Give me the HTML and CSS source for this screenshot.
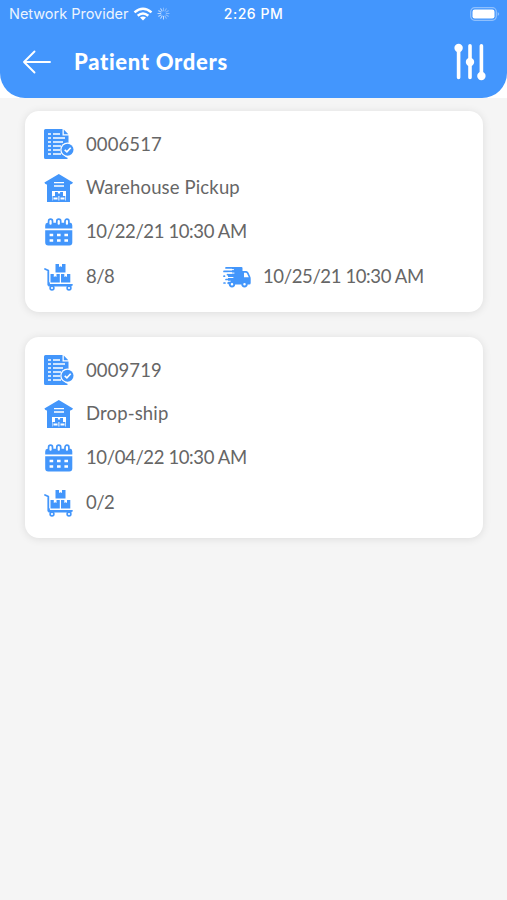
FILE: index.html
```html
<!DOCTYPE html>
<html lang="en">
<head>
<meta charset="utf-8">
<title>Patient Orders</title>
<link rel="stylesheet" href="styles.css">
</head>
<body>
<svg class="sprite" aria-hidden="true">
  <symbol id="order" viewBox="0 0 30 32">
    <path fill="#4396fb" d="M1.500 1h17v6.500h6V15a6.800 6.800 0 0 0-5 11.500q1.500 2.500 4 3.200V31h-22A1.500 1.500 0 0 1 0 29.500v-27A1.500 1.500 0 0 1 1.500 1zM19.800 1.500l4.500 4.700h-4.500z"/>
    <path stroke="#fff" stroke-width="1.400" fill="none" d="M4 6h3M4 10h3M4 14h3M4 18h3M4 22h3M4 26h3M9 6h7M9 10h12M9 14h10M9 18h8M9 22h7M9 26h8"/>
    <circle cx="23.500" cy="21.700" r="7.200" fill="#fff"/>
    <circle cx="23.500" cy="21.700" r="6" fill="#4396fb"/>
    <path stroke="#fff" stroke-width="1.600" fill="none" d="M20.700 21.800l2.200 2.100 3.800-4.200"/>
  </symbol>
  <symbol id="warehouse" viewBox="0 0 30 32">
    <path fill="#4396fb" d="M14.800 2 29 10.600q-.5 2-3 1.800V30H3V12.400Q.8 12.600.4 10.600z"/>
    <path stroke="#fff" stroke-width="1.300" d="M10 10.600h10M10 14h10"/>
    <path fill="#fff" d="M8 19h14v9.500H8z"/>
    <path fill="#4396fb" d="M11 20h8v4h-8zM8.500 24h5.900v5H8.500zM15.400 24h5.900v5h-5.900z"/>
    <path fill="#fff" d="M13.900 20h2.200v1.500h-2.200zM9.500 25.500h4v2h-4zM16.500 25.500h4v2h-4z"/>
  </symbol>
  <symbol id="calendar" viewBox="0 0 30 32">
    <path fill="#4396fb" d="M1.200 12.500V9.500Q1.200 7 3.500 6.800h23Q28.300 7 28.300 9.500v3zM1.200 14.300h27.100v12.200q0 3-3 3H4.200q-3 0-3-3z"/>
    <g fill="#fff" stroke="#4396fb" stroke-width="1.700"><rect x="4.600" y="3.200" width="3.900" height="6.500" rx="1.950"/><rect x="12.800" y="3.200" width="3.900" height="6.500" rx="1.950"/><rect x="21" y="3.200" width="3.900" height="6.500" rx="1.950"/></g>
    <path stroke="#fff" stroke-width="2.300" d="M5.600 19h3.600M13 19h3.600M20.400 19H24M5.600 24.500h3.600M13 24.500h3.600M20.400 24.500H24"/>
  </symbol>
  <symbol id="cart" viewBox="0 0 30 32">
    <path stroke="#4396fb" stroke-width="1.800" stroke-linecap="round" stroke-linejoin="round" fill="none" d="M1 8 4.300 9.500v14.300H28M5 22v2.500h22"/>
    <path fill="#4396fb" d="M11.500 3h10v8.500h-10zM6.500 13h9.300v8.500H6.500zM17 13h9.300v8.500H17z"/>
    <path fill="#fff" d="M15 3h3v3l-1.500-.8L15 6zM9.800 13h2.700v3l-1.300-.8-1.400.8zM20.300 13H23v3l-1.300-.8-1.400.8z"/>
    <g fill="#fff" stroke="#4396fb" stroke-width="1.600"><circle cx="8" cy="27" r="1.900"/><circle cx="25" cy="27" r="1.900"/></g>
  </symbol>
  <symbol id="truck" viewBox="0 0 28 22">
    <path fill="#4396fb" d="M9 1h9.500q1 0 1 1v3h3.700q1.500 0 2.200 1.500l1.800 4q.5 1 .5 2.200v4.300q0 1.500-1.500 1.500H6.500Q5 18.500 5 17V9h4z"/>
    <path fill="#fff" d="M21 6.800h1.800q.9 0 1.300.9l1.700 3.600H21z"/>
    <path stroke="#4396fb" stroke-width="1.700" stroke-linecap="round" d="M3 1.900h9M1 5.400h11M4.500 8.700h7M1 10.200h.5M3 13.500h9M1 17h1M5 17h4"/>
    <path stroke="#fff" stroke-width="1" stroke-linecap="round" d="M6 3.600h4.500M5 7.100h6M4 11.500h6M4.500 15.300h3"/>
    <g fill="#fff" stroke="#4396fb" stroke-width="1.900"><circle cx="9" cy="18.300" r="2.200"/><circle cx="21.500" cy="18.300" r="2.200"/></g>
  </symbol>
</svg>

<header class="header">
  <div class="status">
    <div class="carrier">
      <span class="carrier-name">Network Provider</span>
      <svg class="wifi" viewBox="0 0 20 14"><g fill="none" stroke="#fff" stroke-width="2.500"><path d="M1.500 5.400q8.500-7.400 17 0"/><path d="M4.700 8.700q5.300-4.500 10.600 0"/></g><path fill="#fff" d="M10 13.500 7 10.600q3-2.300 6 0z"/></svg>
      <svg class="spinner" viewBox="0 0 14 14" stroke="#fff" stroke-width="1.100" stroke-linecap="round"><path opacity=".35" d="M7 1v3M10 1.800 8.500 4.400M12.200 4 9.600 5.500"/><path opacity=".4" d="M13 7h-3M12.200 10 9.600 8.500M10 12.200 8.500 9.600"/><path opacity=".65" d="M7 13v-3M4 12.200l1.500-2.600M1.800 10l2.600-1.500M1 7h3M1.800 4l2.600 1.500M4 1.800l1.500 2.600"/></svg>
    </div>
    <time class="clock">2:26 PM</time>
    <svg class="battery" viewBox="0 0 30 14"><rect x=".7" y=".7" width="25.600" height="12.600" rx="4" fill="none" stroke="#8fc0fd" stroke-width="1.200"/><rect x="2.500" y="2.500" width="22" height="9" rx="2.200" fill="#fff"/><path fill="#8fc0fd" d="M27.700 5q3 2 0 4z"/></svg>
  </div>
  <nav class="bar">
    <svg class="back" viewBox="0 0 30 26" fill="none" stroke="#fff" stroke-width="1.900" stroke-linecap="round" stroke-linejoin="round"><path d="M28 13H2M12.500 2.500 2 13l10.500 10.500"/></svg>
    <h1 class="title">Patient Orders</h1>
    <svg class="filter" viewBox="0 0 32 38" fill="#fff"><g stroke="#fff" stroke-width="3.600" stroke-linecap="round"><path d="M4.600 3v31.500M16 2.700v31.800M27.400 2.700v31.800"/></g><circle cx="4.600" cy="5" r="4.200"/><circle cx="16" cy="19" r="4.200"/><circle cx="27.400" cy="33" r="4.200"/></svg>
  </nav>
</header>

<main class="orders">
  <article class="card">
    <div class="row"><svg class="icon"><use href="#order"/></svg><span class="text number">0006517</span></div>
    <div class="row"><svg class="icon"><use href="#warehouse"/></svg><span class="text">Warehouse Pickup</span></div>
    <div class="row"><svg class="icon"><use href="#calendar"/></svg><span class="text date">10/22/21 10:30 AM</span></div>
    <div class="row">
      <div class="count"><svg class="icon"><use href="#cart"/></svg><span class="text ratio">8/8</span></div>
      <svg class="truck"><use href="#truck"/></svg><span class="text date">10/25/21 10:30 AM</span>
    </div>
  </article>
  <article class="card">
    <div class="row"><svg class="icon"><use href="#order"/></svg><span class="text number">0009719</span></div>
    <div class="row"><svg class="icon"><use href="#warehouse"/></svg><span class="text">Drop-ship</span></div>
    <div class="row"><svg class="icon"><use href="#calendar"/></svg><span class="text date">10/04/22 10:30 AM</span></div>
    <div class="row"><div class="count"><svg class="icon"><use href="#cart"/></svg><span class="text ratio">0/2</span></div></div>
  </article>
</main>
</body>
</html>
```
FILE: styles.css
```css
* { box-sizing: border-box; }

body {
  margin: 0;
  min-height: 900px;
  background: linear-gradient(#fff 98px, #f5f5f5 98px);
  font-family: Lato, sans-serif;
  color: #666;
}

svg { display: block; flex: none; }
.sprite { display: none; }

.header {
  height: 98px;
  background: #4396fd;
  border-radius: 0 0 25px 25px;
  color: #fff;
}

.status {
  display: grid;
  grid-template-columns: 1fr auto 1fr;
  align-items: center;
  height: 27px;
  padding: 0 7px 0 9px;
  font: 14.5px/27px Inter, sans-serif;
}

.carrier { display: flex; align-items: center; }
.carrier-name { width: 124px; white-space: nowrap; letter-spacing: -0.02px; opacity: 0.9; }
.wifi { width: 20px; height: 14px; }
.spinner { width: 13px; height: 13px; margin-left: 4px; }
.clock { margin: 0 1px 0 -1px; font-size: 14px; font-weight: 500; letter-spacing: 0.5px; }
.battery { width: 30px; height: 14px; justify-self: end; }

.bar {
  display: flex;
  align-items: center;
  height: 70px;
  padding: 0 21px 0 22px;
}

.back { width: 30px; height: 26px; }
.title { flex: 1; margin: 0 0 0 22px; font-size: 22px; font-weight: 900; line-height: 30px; letter-spacing: 0.69px; }
.filter { width: 32px; height: 38px; }

.orders {
  display: flex;
  flex-direction: column;
  gap: 25px;
  padding: 13px 24px 0 25px;
}

.card {
  display: grid;
  grid-template-rows: 44px 43px 45px 45px;
  height: 201px;
  padding: 11px 19px 0;
  background: #fff;
  border-radius: 14px;
  box-shadow: 0 1px 9px rgb(0 0 0 / 10%);
}

.row, .count { display: flex; align-items: center; }
.count { width: 179px; }
.icon { width: 30px; height: 32px; margin-right: 12px; }
.truck { width: 28px; height: 22px; margin-right: 12px; }
.text { padding-bottom: 2px; font-size: 18.5px; line-height: 24px; letter-spacing: 0.15px; white-space: nowrap; }
.number { padding: 0; letter-spacing: 0.1px; }
.date { letter-spacing: -0.38px; }
.ratio { letter-spacing: -0.5px; }
```
